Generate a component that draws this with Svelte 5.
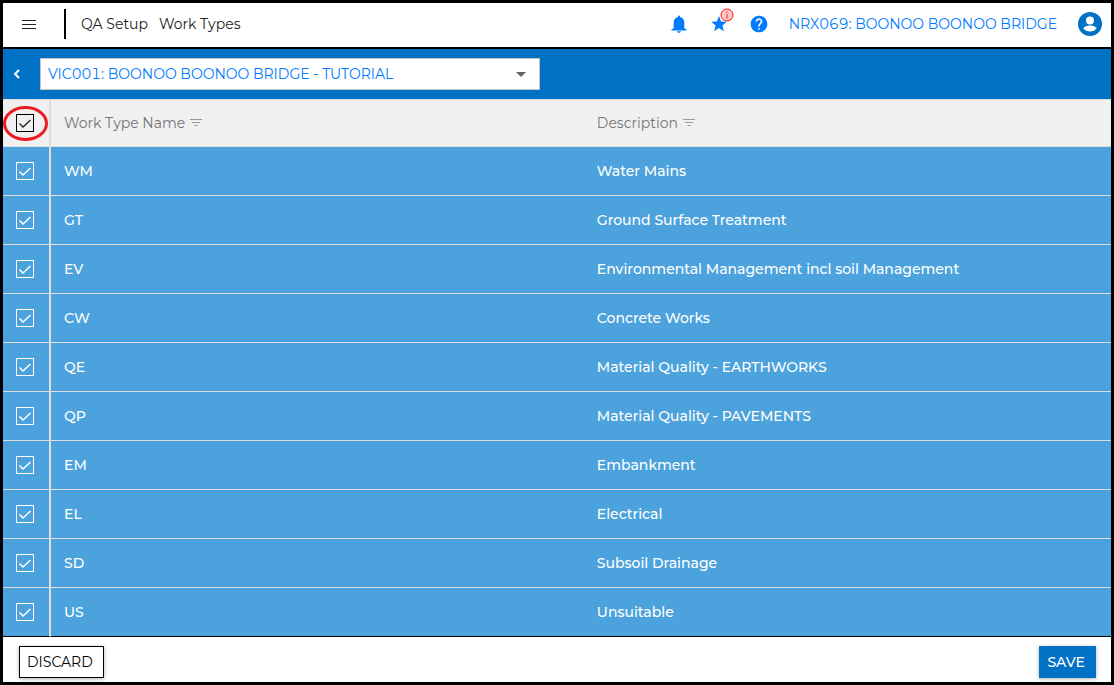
<script lang="ts">
    interface WorkType {
        name: string;
        description: string;
        selected: boolean;
    }

    const projects = ["VIC001: BOONOO BOONOO BRIDGE - TUTORIAL"];

    let project: string = $state(projects[0]);

    let workTypes: WorkType[] = $state([
        { name: "WM", description: "Water Mains", selected: true },
        { name: "GT", description: "Ground Surface Treatment", selected: true },
        { name: "EV", description: "Environmental Management incl soil Management", selected: true },
        { name: "CW", description: "Concrete Works", selected: true },
        { name: "QE", description: "Material Quality - EARTHWORKS", selected: true },
        { name: "QP", description: "Material Quality - PAVEMENTS", selected: true },
        { name: "EM", description: "Embankment", selected: true },
        { name: "EL", description: "Electrical", selected: true },
        { name: "SD", description: "Subsoil Drainage", selected: true },
        { name: "US", description: "Unsuitable", selected: true },
    ]);

    let allSelected: boolean = $derived(workTypes.every((w) => w.selected));

    function setAll(value: boolean) {
        workTypes.forEach((w) => (w.selected = value));
    }
</script>

{#snippet tick()}
    <svg class="tick" viewBox="0 0 18 18" aria-hidden="true"><path d="M3.5 9.5l3.5 3.5 7.5-7" /></svg>
{/snippet}

{#snippet filterIcon()}
    <svg class="filter" viewBox="0 0 12 9" aria-hidden="true">
        <path d="M0 1.500h12M2 4.500h8M4.500 7.500h3" />
    </svg>
{/snippet}

<div class="page">
    <header>
        <button class="icon menu" aria-label="Menu">
            <svg width="14" height="12" viewBox="0 0 14 12"><path d="M0 1.5h14M0 5.5h14M0 9.5h14" stroke="#222" /></svg>
        </button>
        <nav>
            <a href="#setup">QA Setup</a>
            <a href="#types">Work Types</a>
        </nav>
        <div class="tools">
            <button class="icon" aria-label="Notifications">
                <svg width="20" height="20" viewBox="0 0 20 20"><path fill="#007bff" d="M9 2.500a1 1 0 0 1 2 0v.6c2.600.6 4.300 2.500 4.300 5.400v5c0 .8.6 1.500 2.200 2v.9h-15v-.9c1.600-.5 2.200-1.200 2.200-2v-5c0-2.900 1.700-4.800 4.300-5.400zM8 17.200h4c-.3 1-1.100 1.500-2 1.500s-1.700-.5-2-1.500z" /></svg>
            </button>
            <button class="icon" aria-label="Favourites">
                <svg width="20" height="20" viewBox="0 0 20 20"><path fill="#007bff" d="M10 2l2.100 5.400 5.700.3-4.400 3.700 1.500 5.800L10 14.100l-4.900 3.100 1.500-5.800-4.400-3.700 5.700-.3z" /></svg>
                <svg class="badge" width="14" height="14" viewBox="0 0 14 14">
                    <circle cx="7" cy="7" r="6" fill="#ffc4c4" stroke="#f11" />
                    <path d="M7 3.500v1.200M7 6v4.500" stroke="#f22" />
                </svg>
            </button>
            <button class="icon" aria-label="Help">
                <svg width="20" height="20" viewBox="0 0 24 24"><path fill="#007bff" d="M12 2C6.480 2 2 6.480 2 12s4.480 10 10 10 10-4.480 10-10S17.520 2 12 2zm1 17h-2v-2h2v2zm2.070-7.750l-.9.920C13.450 12.900 13 13.500 13 15h-2v-.5c0-1.100.450-2.100 1.170-2.830l1.240-1.260c.370-.360.590-.860.590-1.410 0-1.100-.9-2-2-2s-2 .9-2 2H8c0-2.210 1.790-4 4-4s4 1.790 4 4c0 .880-.360 1.680-.930 2.250z" /></svg>
            </button>
            <a class="project" href="#project">NRX069: BOONOO BOONOO BRIDGE</a>
            <button class="icon avatar" aria-label="Account">
                <svg width="24" height="24" viewBox="0 0 24 24">
                    <circle cx="12" cy="12" r="12" fill="#0072c6" />
                    <circle cx="12" cy="8.500" r="4" fill="#fff" />
                    <path d="M5.500 16.500c0-2 4-3 6.500-3s6.500 1 6.500 3c-1.300 1.800-3.700 3-6.500 3s-5.200-1.200-6.500-3z" fill="#fff" />
                </svg>
            </button>
        </div>
    </header>

    <div class="bar">
        <button class="icon back" aria-label="Back">
            <svg width="8" height="10" viewBox="0 0 8 10"><path d="M6 1L2 5l4 4" fill="none" stroke="#fff" stroke-width="2" /></svg>
        </button>
        <div class="picker">
            <select bind:value={project} aria-label="Project">
                {#each projects as p}
                    <option>{p}</option>
                {/each}
            </select>
            <svg class="arrow" viewBox="0 0 10 5" aria-hidden="true"><path d="M0 0h10L5 5z" /></svg>
        </div>
    </div>

    <table>
        <thead>
            <tr>
                <th class="check">
                    <label>
                        <input type="checkbox" aria-label="Select all" checked={allSelected} onchange={(e) => setAll(e.currentTarget.checked)} />
                        {@render tick()}
                    </label>
                    <svg class="ring" viewBox="0 0 45 35" aria-hidden="true"><ellipse cx="22.500" cy="17.500" rx="21" ry="16" /></svg>
                </th>
                <th class="name">Work Type Name {@render filterIcon()}</th>
                <th>Description {@render filterIcon()}</th>
            </tr>
        </thead>
        <tbody>
            {#each workTypes as w}
                <tr class:selected={w.selected}>
                    <td class="check">
                        <label>
                            <input type="checkbox" aria-label={w.name} bind:checked={w.selected} />
                            {@render tick()}
                        </label>
                    </td>
                    <td class="name">{w.name}</td>
                    <td>{w.description}</td>
                </tr>
            {/each}
        </tbody>
    </table>

    <footer>
        <button class="btn">DISCARD</button>
        <button class="btn save">SAVE</button>
    </footer>
</div>

<style>
:global(body) {
    margin: 0;
}
.page {
    box-sizing: border-box;
    display: flex;
    flex-direction: column;
    min-height: 100vh;
    border: 3px solid #000;
    background: #fff;
    color: #222;
    font-family: Montserrat, Inter, "Open Sans", sans-serif;
    font-size: 14px;
    font-variant-numeric: tabular-nums;
}
button, select {
    font: inherit;
    font-variant-numeric: tabular-nums;
    cursor: pointer;
}
a {
    color: inherit;
    text-decoration: none;
}
svg {
    display: block;
}
header {
    display: flex;
    align-items: center;
    height: 44px;
    padding: 0 9px 0 14px;
    border-bottom: 2px solid #000;
}
.icon {
    position: relative;
    padding: 0;
    border: 0;
    background: none;
}
.menu {
    display: flex;
    justify-content: center;
    align-items: center;
    width: 24px;
    height: 22px;
}
nav {
    display: flex;
    align-items: center;
    gap: 11px;
    height: 30px;
    margin: 0 0 2px 23px;
    padding-left: 15px;
    border-left: 2px solid #000;
    line-height: 16px;
}
.tools {
    display: flex;
    align-items: center;
    gap: 20px;
    margin: 0 0 2px auto;
}
.badge {
    position: absolute;
    top: -6px;
    right: -5px;
}
.project {
    color: #007bff;
    line-height: 16px;
}
.avatar {
    margin-left: 1px;
}
.bar {
    display: flex;
    align-items: center;
    height: 50px;
    background: #0072c6;
}
.back {
    display: flex;
    justify-content: center;
    width: 28px;
    margin-right: 9px;
}
.picker {
    position: relative;
    width: 500px;
}
select {
    display: block;
    box-sizing: border-box;
    width: 100%;
    height: 32px;
    padding: 0 32px 0 7px;
    border: 1px solid #c4c4c4;
    border-radius: 0;
    background: #fff;
    color: #007bff;
    appearance: none;
}
.arrow {
    position: absolute;
    top: 14px;
    right: 14px;
    width: 10px;
    fill: #666;
    pointer-events: none;
}
table {
    width: 100%;
    table-layout: fixed;
    border-collapse: separate;
    border-spacing: 0;
}
th, td {
    box-sizing: border-box;
    height: 49px;
    padding: 0 14px;
    border-bottom: 1px solid #dedede;
    text-align: left;
    font-weight: 500;
}
th {
    height: 48px;
    border-top: 1px solid #dedede;
    background: #f0f0f0;
    color: #757575;
    font-weight: 400;
}
.name {
    width: 48%;
    padding-left: 13px;
}
.check {
    position: relative;
    width: 48px;
    padding: 0 0 0 13px;
    border-right: 2px solid #dedede;
}
.selected {
    background: #4ca2dc;
    color: #fff;
}
tbody tr:last-child td {
    border-bottom-color: #000;
}
label {
    position: relative;
    display: block;
    width: 18px;
    height: 18px;
}
input {
    display: block;
    box-sizing: border-box;
    width: 18px;
    height: 18px;
    margin: 0;
    border: 1px solid #000;
    appearance: none;
}
.selected input {
    border-color: #fff;
}
.tick {
    position: absolute;
    inset: 0;
    display: none;
    fill: none;
    stroke: #222;
    stroke-width: 1.3;
    pointer-events: none;
}
.selected .tick {
    stroke: #fff;
    stroke-width: 1.5;
}
input:checked + .tick {
    display: block;
}
.ring {
    position: absolute;
    top: 6px;
    left: 0;
    width: 45px;
    height: 35px;
    fill: none;
    stroke: #ed1c24;
    stroke-width: 3;
    pointer-events: none;
}
.filter {
    display: inline-block;
    width: 12px;
    height: 9px;
    margin-left: 1px;
    vertical-align: 1px;
    stroke: #999;
}
footer {
    display: flex;
    justify-content: space-between;
    align-items: center;
    flex: 1;
    padding: 4px 15px 0 16px;
}
.btn {
    height: 32px;
    padding: 0 10px 0 7px;
    border: 1px solid #000;
    background: #fff;
    color: #000;
    box-shadow: 0 1px 4px rgba(0, 0, 0, 0.3);
}
.save {
    border-color: #0072c6;
    background: #0072c6;
    color: #fff;
    font-weight: 500;
}
</style>
